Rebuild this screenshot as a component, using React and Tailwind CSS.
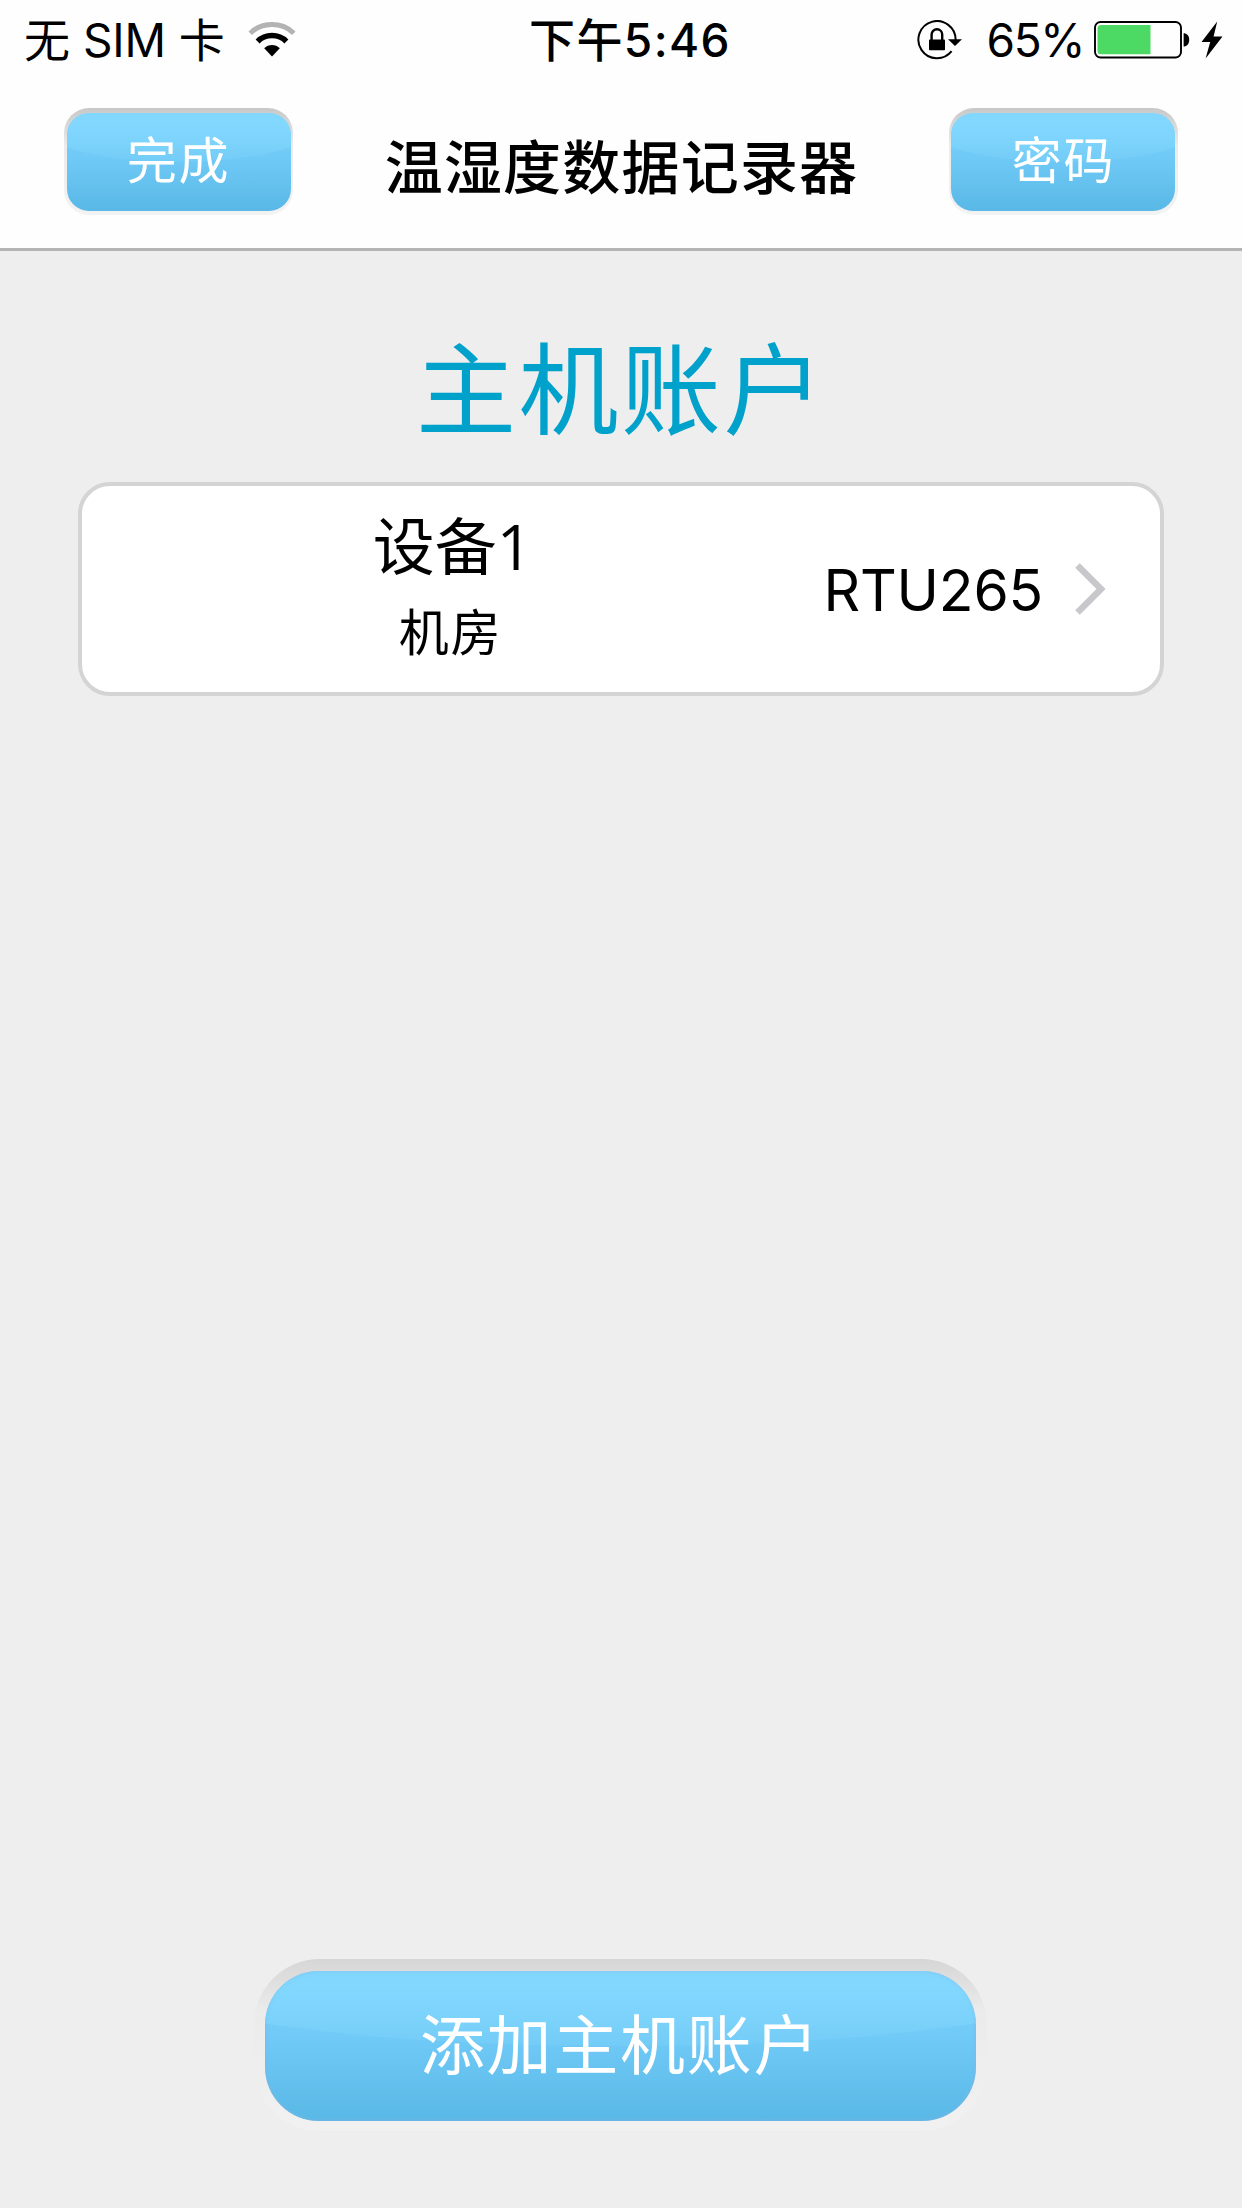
import clsx from "clsx";

const devices = [{ name: "设备1", room: "机房", model: "RTU265" }];

function WifiIcon() {
  return (
    <svg width="48" height="38" viewBox="0 0 48 38" fill="none" aria-hidden="true">
      <path d="M2.2 12.2C14 .7 34 .7 45.8 12.2" stroke="#b3b3b3" strokeWidth="5" />
      <path d="M9.6 20.4C17.4 12.6 30.6 12.6 38.4 20.4" stroke="#000" strokeWidth="5.6" />
      <path d="M16.2 27.2C20.6 23 27.4 23 31.8 27.2L24 35.5Z" fill="#000" />
    </svg>
  );
}

function RotationLockIcon() {
  return (
    <svg width="46" height="40" viewBox="0 0 46 40" fill="none" aria-hidden="true">
      <path d="M38.6 20A18.6 18.6 0 1 0 34.6 31.2" stroke="#000" strokeWidth="2" />
      <path d="M31 19.2H45L38 26Z" fill="#000" />
      <path d="M14.6 21V14.6a5.3 5.3 0 0 1 10.6 0V21" stroke="#000" strokeWidth="2.4" />
      <rect x="12" y="19.4" width="16" height="10.8" rx="0.8" fill="#000" />
    </svg>
  );
}

function BatteryIcon() {
  return (
    <svg width="96" height="38" viewBox="0 0 96 38" fill="none" aria-hidden="true">
      <rect x="1" y="1" width="86" height="35.5" rx="5.5" stroke="#000" strokeWidth="1.9" />
      <path d="M7 4H56.5V33.2H7Q3.5 33.2 3.5 29.7V7.5Q3.5 4 7 4Z" fill="#4cd964" />
      <path d="M89.6 12.2C92.9 12.2 95.2 14.6 95.2 18.8S92.9 25.6 89.6 25.6Z" fill="#000" />
    </svg>
  );
}

function BoltIcon() {
  return (
    <svg width="22" height="38" viewBox="0 0 22 38" aria-hidden="true">
      <path d="M16.2 .5L.5 21H9.2L4.6 37.5L21.5 15.5H12.6Z" fill="#000" />
    </svg>
  );
}

function StatusBar() {
  return (
    <div className="grid h-[80px] grid-cols-[1fr_auto_1fr] items-center pr-[19px] pl-5 text-[46px] leading-[80px]">
      <div className="flex items-center pl-[4px]">
        <span className="whitespace-pre">
          无 <span className="tracking-[-0.2px]">SIM</span> 卡
        </span>
        <span className="ml-[23.5px]">
          <WifiIcon />
        </span>
      </div>
      <div className="pl-[17px] font-medium tracking-[1.4px]">下午5:46</div>
      <div className="flex items-center justify-end">
        <RotationLockIcon />
        <span className="mr-[10px] ml-[24px] tracking-[-1.4px]">65%</span>
        <BatteryIcon />
        <span className="ml-[11px]">
          <BoltIcon />
        </span>
      </div>
    </div>
  );
}

function GlossyButton({ large = false, children }) {
  return (
    <button
      className={clsx(
        "block",
        large
          ? "h-[172px] w-[733px] rounded-[66px] bg-linear-to-b from-[#d6d6d6] via-[#ebebeb] via-30% to-[#f1f1f1] px-[11px] pt-[12px] pb-[10px]"
          : "h-[107px] w-[229px] rounded-[25px] bg-linear-to-b from-[#c8c8c8] via-[#ebebeb] via-35% to-[#f3f3f3] px-[2.5px] pt-[5px] pb-[4px]"
      )}
    >
      <span
        className={clsx(
          "relative flex h-full w-full justify-center overflow-hidden bg-linear-to-b from-[#80d5ff] via-[#6ec8f5] via-50% to-[#59b8e6] text-white",
          large
            ? "rounded-[54px] text-[65px] leading-[141px] tracking-[1.7px] shadow-[inset_0_0_4px_#7fb5e4]"
            : "rounded-[22px] text-[50px] leading-[88px] tracking-[1.8px]"
        )}
      >
        {/* gloss over the upper half */}
        <span className="absolute -inset-x-1/5 -top-1/2 h-full rounded-[50%] bg-linear-to-b from-[#86dbff]/0 from-40% via-[#86dbff]/60 via-60% to-[#86dbff]/20" />
        <span className="relative">{children}</span>
      </span>
    </button>
  );
}

function NavBar() {
  return (
    <div className="flex h-[171px] items-start justify-between border-b-3 border-[#b4b4b4] pt-[28px] pr-[64px] pl-[64px]">
      <GlossyButton>完成</GlossyButton>
      <h1 className="pl-[1px] text-[58px] leading-[112px] font-medium tracking-[1.2px]">
        温湿度数据记录器
      </h1>
      <GlossyButton>密码</GlossyButton>
    </div>
  );
}

function DeviceRow({ device }) {
  return (
    <li className="flex h-[214px] items-center rounded-[32px] border-4 border-[#d4d4d4] bg-white pr-[54px]">
      <div className="flex flex-1 flex-col items-center pb-[7px] pl-[125px]">
        <span className="font-['Open_Sans','Noto_Sans_CJK_SC',sans-serif] text-[62px] leading-[86px]">
          {device.name}
        </span>
        <span className="pr-[4px] text-[50px] leading-[80px] tracking-[1.8px]">{device.room}</span>
      </div>
      <span className="w-[345px] pt-[3px] text-right font-['Inter'] text-[57px] leading-[86px] tracking-[-0.2px]">
        {device.model}
      </span>
      <svg className="ml-[32px]" width="31" height="52" viewBox="0 0 31 52" fill="none" aria-hidden="true">
        <path d="M2.5 2.5L26 26L2.5 49.5" stroke="#c7c7cc" strokeWidth="6.5" />
      </svg>
    </li>
  );
}

export default function App() {
  return (
    <div className="flex h-[2208px] w-[1242px] flex-col bg-[#eeeeee] font-['Noto_Sans_CJK_SC',sans-serif] text-black">
      <header className="bg-[#fefefe]">
        <div className="font-['Inter','Noto_Sans_CJK_SC',sans-serif]">
          <StatusBar />
        </div>
        <NavBar />
      </header>

      <main className="flex flex-1 flex-col px-[78px]">
        <h2 className="mt-[63px] mb-[28px] text-center text-[100px] leading-[140px] tracking-[2.5px] text-[#00a2cb]">
          主机账户
        </h2>
        <ul>
          {devices.map((device) => (
            <DeviceRow key={device.name} device={device} />
          ))}
        </ul>
      </main>

      <footer className="flex justify-center pr-[2px] pb-[77px]">
        <GlossyButton large>添加主机账户</GlossyButton>
      </footer>
    </div>
  );
}
